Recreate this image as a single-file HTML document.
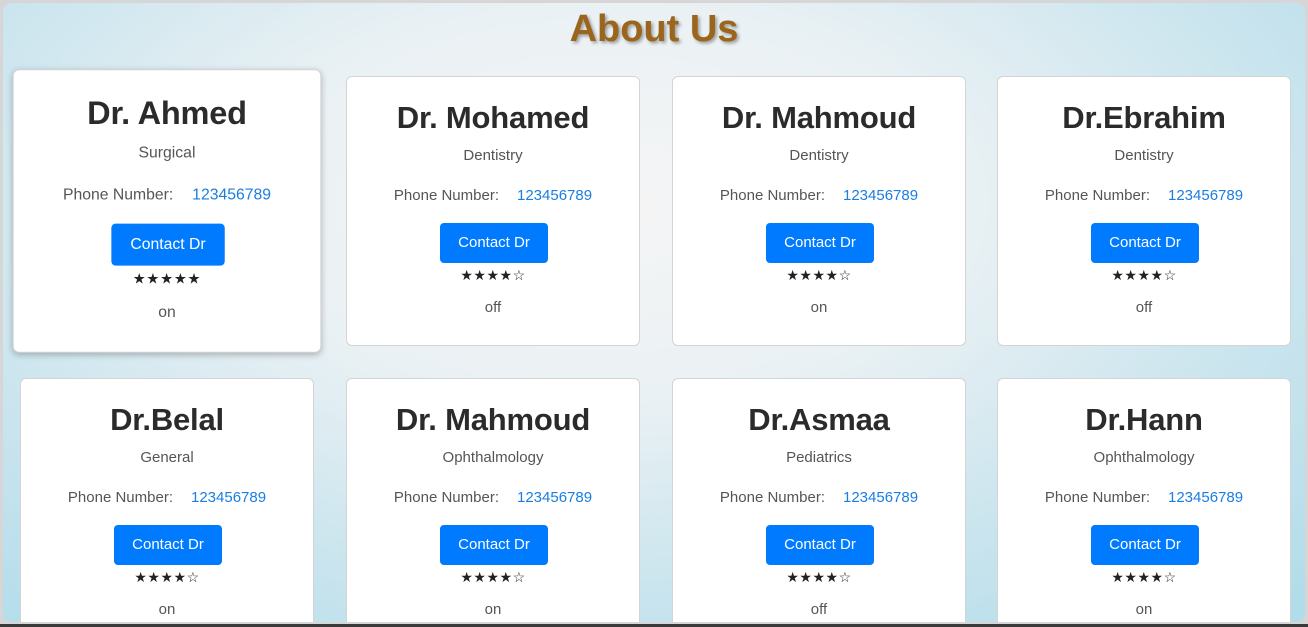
<!DOCTYPE html>
<html><head><meta charset="utf-8"><style>
html,body{margin:0;padding:0;width:1308px;height:627px;overflow:hidden;background:#3a3a3a;font-family:"Liberation Sans",sans-serif}
.win{position:absolute;left:0;top:0;width:1308px;height:624px;background:#d6d6d6;}
.bg{position:absolute;left:3px;top:3px;width:1302px;height:619px;border-radius:8px;overflow:hidden;
background:radial-gradient(ellipse 1000px 560px at 600px 200px,#f5f5f5 0%,#eaf1f4 35%,#cbe5ee 68%,#b1dcea 100%);}
h1{position:absolute;left:0;width:1308px;top:8px;margin:0;text-align:center;font-size:38px;font-weight:bold;color:#9b661c;text-shadow:2px 2px 3px rgba(0,0,0,.35)}
.card{position:absolute;width:294px;height:270px;background:#fff;border:1px solid #d4d4d4;border-radius:6px;box-sizing:border-box;text-align:center;color:#555}
.card.big{transform:scale(1.05);box-shadow:0 2px 6px rgba(0,0,0,.25)}
.n{position:absolute;left:0;right:0;top:23px;font-size:31px;font-weight:bold;color:#2b2b2b;letter-spacing:-0.2px}
.s{position:absolute;left:0;right:0;top:70px;font-size:15px}
.p{position:absolute;left:0;right:0;top:110px;font-size:15px}
.p span{color:#1a7ee0;margin-left:18px}
.b{position:absolute;left:93px;top:146px;width:108px;height:40px;background:#007bff;border-radius:4px;color:#fff;font-size:15px;line-height:40px}
.st{position:absolute;left:0;right:0;top:190px;font-size:14px;color:#222;letter-spacing:0.5px}
.o{position:absolute;left:0;right:0;top:222px;font-size:15px}
</style></head><body>
<div class="win"><div class="bg"></div></div>
<h1>About Us</h1>

<div class="card big" style="left:20px;top:76px"><div class="n">Dr. Ahmed</div><div class="s">Surgical</div><div class="p">Phone Number:<span>123456789</span></div><div class="b">Contact Dr</div><div class="st">★★★★★</div><div class="o">on</div></div>
<div class="card" style="left:346px;top:76px"><div class="n">Dr. Mohamed</div><div class="s">Dentistry</div><div class="p">Phone Number:<span>123456789</span></div><div class="b">Contact Dr</div><div class="st">★★★★☆</div><div class="o">off</div></div>
<div class="card" style="left:672px;top:76px"><div class="n">Dr. Mahmoud</div><div class="s">Dentistry</div><div class="p">Phone Number:<span>123456789</span></div><div class="b">Contact Dr</div><div class="st">★★★★☆</div><div class="o">on</div></div>
<div class="card" style="left:997px;top:76px"><div class="n">Dr.Ebrahim</div><div class="s">Dentistry</div><div class="p">Phone Number:<span>123456789</span></div><div class="b">Contact Dr</div><div class="st">★★★★☆</div><div class="o">off</div></div>

<div class="card" style="left:20px;top:378px;height:244px;border-bottom:none;border-radius:6px 6px 0 0"><div class="n">Dr.Belal</div><div class="s">General</div><div class="p">Phone Number:<span>123456789</span></div><div class="b">Contact Dr</div><div class="st">★★★★☆</div><div class="o">on</div></div>
<div class="card" style="left:346px;top:378px;height:244px;border-bottom:none;border-radius:6px 6px 0 0"><div class="n">Dr. Mahmoud</div><div class="s">Ophthalmology</div><div class="p">Phone Number:<span>123456789</span></div><div class="b">Contact Dr</div><div class="st">★★★★☆</div><div class="o">on</div></div>
<div class="card" style="left:672px;top:378px;height:244px;border-bottom:none;border-radius:6px 6px 0 0"><div class="n">Dr.Asmaa</div><div class="s">Pediatrics</div><div class="p">Phone Number:<span>123456789</span></div><div class="b">Contact Dr</div><div class="st">★★★★☆</div><div class="o">off</div></div>
<div class="card" style="left:997px;top:378px;height:244px;border-bottom:none;border-radius:6px 6px 0 0"><div class="n">Dr.Hann</div><div class="s">Ophthalmology</div><div class="p">Phone Number:<span>123456789</span></div><div class="b">Contact Dr</div><div class="st">★★★★☆</div><div class="o">on</div></div>
</body></html>
